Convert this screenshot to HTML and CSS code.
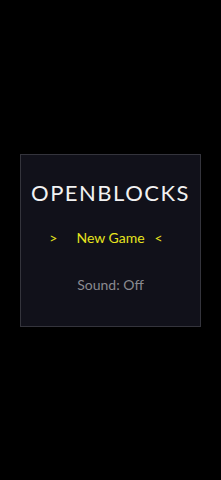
FILE: index.html
```html
<!DOCTYPE html>
<html lang="en">
<head>
  <meta charset="UTF-8">
  <meta name="viewport" content="width=device-width, initial-scale=1.0">
  <link rel="stylesheet" href="styles.css">
  <title>OpenBlocks</title>
</head>
<body>
  <div class="menu-box">
    <h1 class="title">OPENBLOCKS</h1>
    <div class="menu-item selected">
      <span class="arrow left">&gt;</span>
      <span class="label">New Game</span>
      <span class="arrow right">&lt;</span>
    </div>
    <div class="menu-item">
      <span class="label">Sound: Off</span>
    </div>
  </div>
</body>
</html>
```

FILE: styles.css
```css
body {
  margin: 0;
  height: 100vh;
  display: flex;
  justify-content: center;
  align-items: center;
  background-color: #000;
  font-family: Lato, "Open Sans", sans-serif;
}

.menu-box {
  width: 179px;
  height: 171px;
  box-sizing: content-box;
  border: 1px solid #34343c;
  background-color: #11111a;
  display: flex;
  flex-direction: column;
  align-items: center;
}

.title {
  margin: 25px 0 0;
  font-size: 22px;
  font-weight: 400;
  letter-spacing: 1.5px;
  color: #f2f2f2;
  line-height: 26px;
}

.menu-item {
  display: flex;
  font-size: 14px;
  line-height: 16px;
  color: #8a8a90;
  margin-top: 31px;
}

.menu-item.selected {
  color: #e6e41e;
  margin-top: 24px;
}

.arrow.left {
  margin-right: 19px;
}

.arrow.right {
  margin-left: 10px;
  margin-right: 9px;
}
```
